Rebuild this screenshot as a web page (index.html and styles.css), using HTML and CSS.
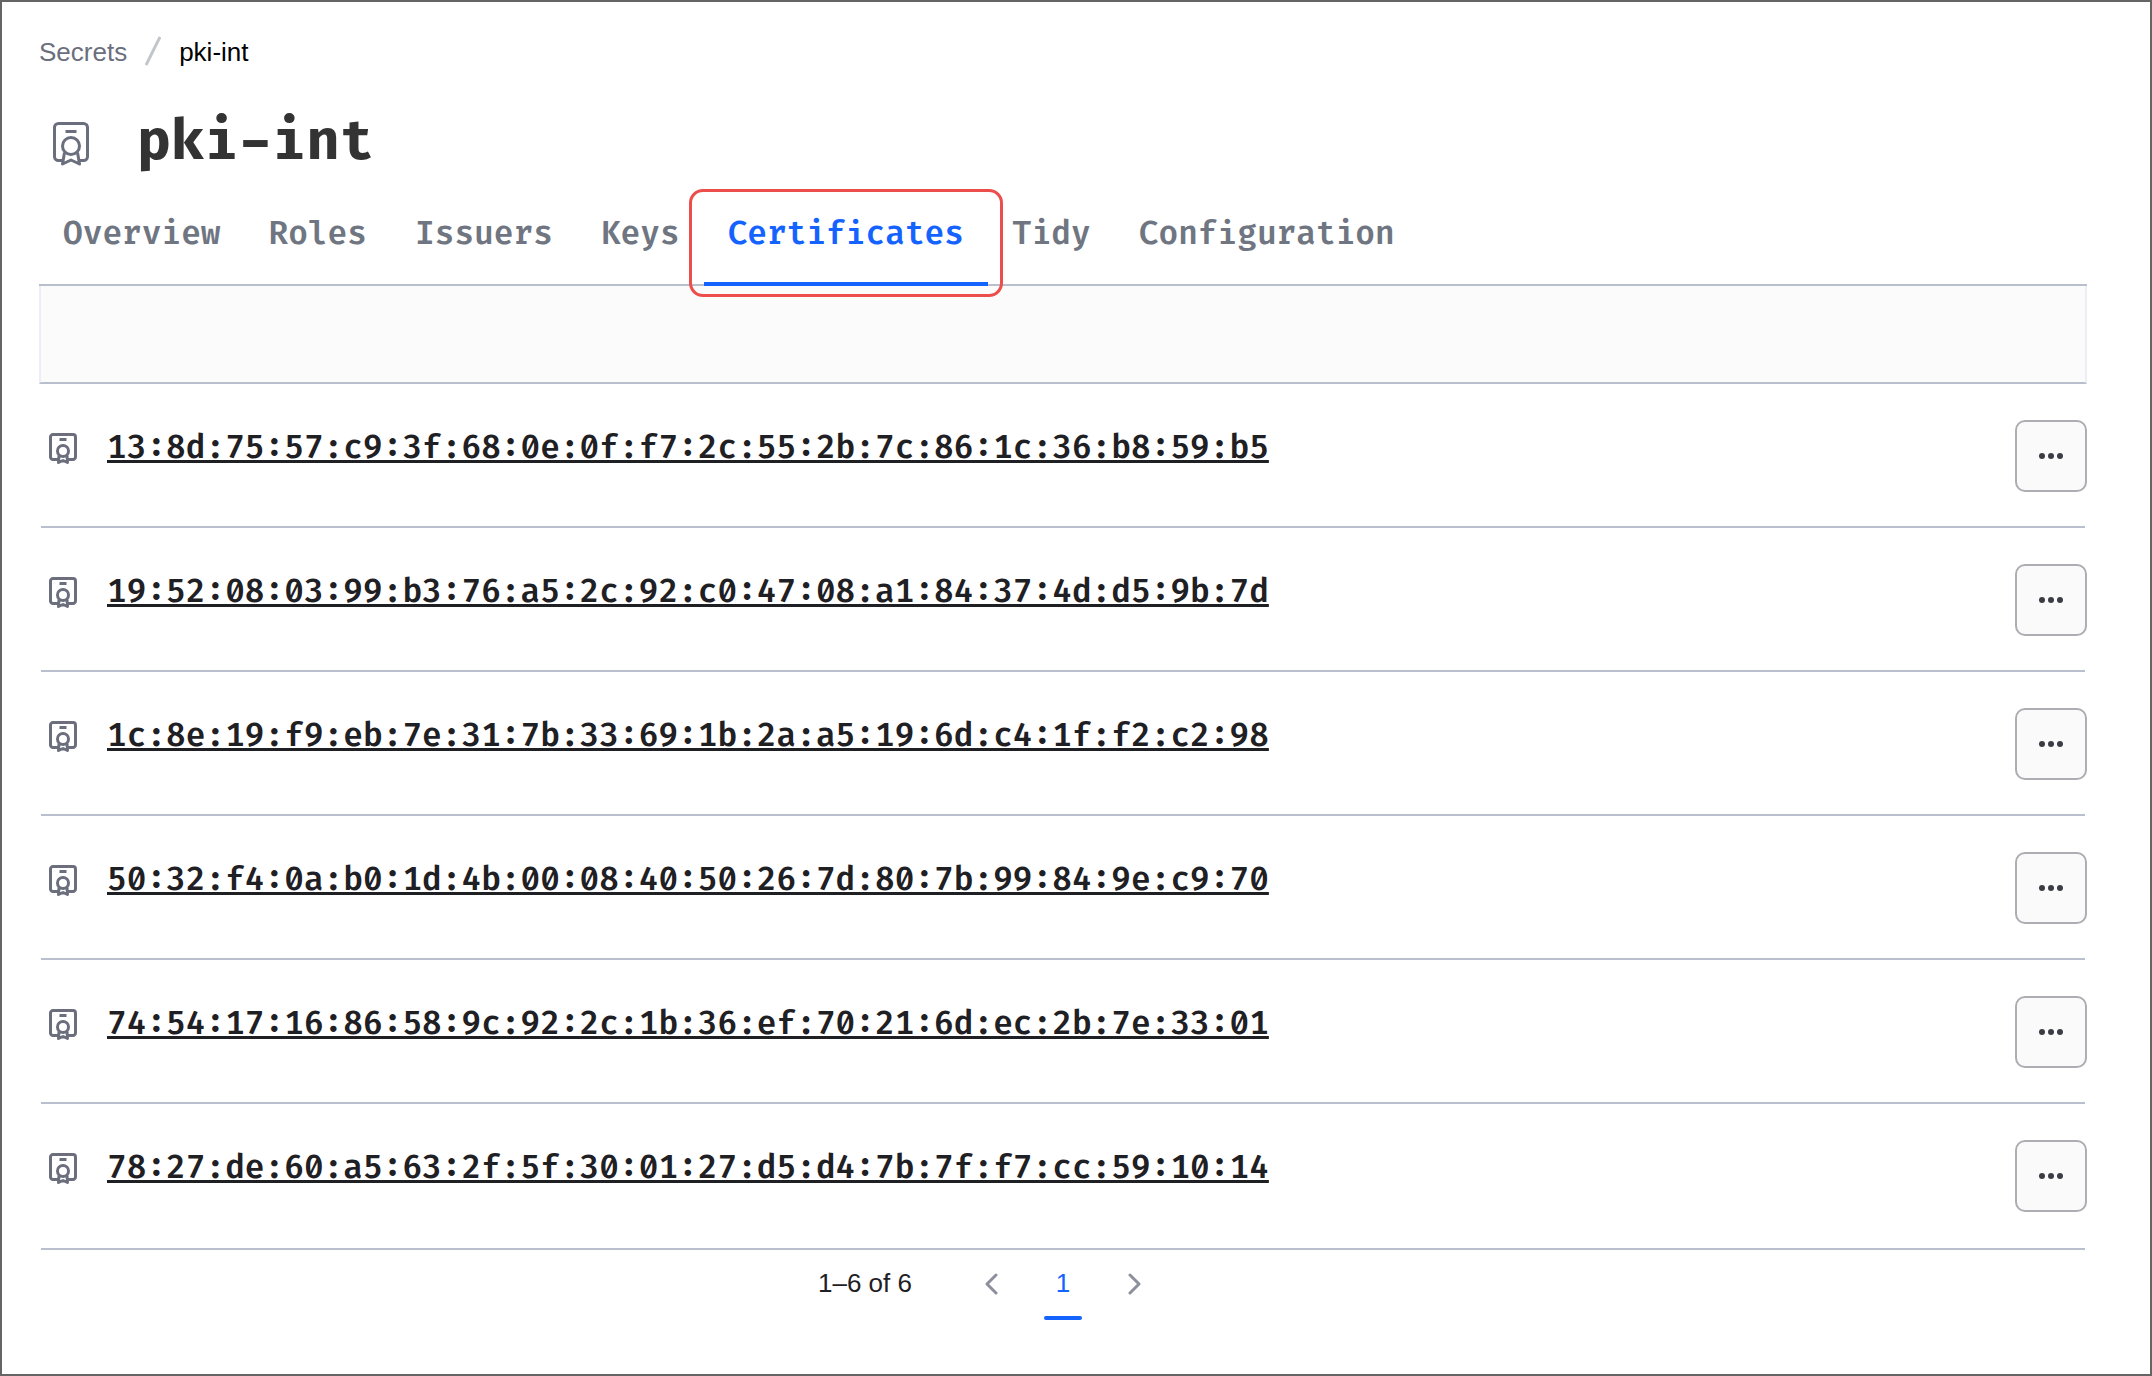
FILE: index.html
```html
<!DOCTYPE html>
<html lang="en">
<head>
<meta charset="utf-8">
<title>pki-int certificates</title>
<link rel="stylesheet" href="styles.css">
</head>
<body>
<svg class="sprite" aria-hidden="true">
  <symbol id="certificate-24" viewBox="0 0 48 48">
    <path d="M15.500 40.500h-4a4 4 0 0 1-4-4v-29a4 4 0 0 1 4-4h25a4 4 0 0 1 4 4v29a4 4 0 0 1-4 4h-4M18.500 11.500h11"/>
    <circle cx="24" cy="26" r="8.500"/>
    <path d="M17.500 32.500l-2 11.500 8.500-4 8.500 4-2-11.500"/>
  </symbol>
  <symbol id="certificate-16" viewBox="0 0 36 36">
    <path d="M13 28.500H8a2.500 2.500 0 0 1-2.500-2.500V6A2.500 2.500 0 0 1 8 3.500h20A2.500 2.500 0 0 1 30.500 6v20a2.500 2.500 0 0 1-2.500 2.500h-5M14.500 8.500h7"/>
    <circle cx="18" cy="20" r="5.500"/>
    <path d="M14 24.500l-.5 7 4.500-2 4.500 2-.5-7"/>
  </symbol>
  <symbol id="more" viewBox="0 0 24 24">
    <circle cx="3" cy="12" r="3"/><circle cx="12" cy="12" r="3"/><circle cx="21" cy="12" r="3"/>
  </symbol>
</svg>
<main class="page">
  <nav class="breadcrumb" aria-label="Breadcrumb">
    <a class="breadcrumb-link" href="#secrets">Secrets</a>
    <svg class="breadcrumb-slash" viewBox="0 0 16 32" aria-hidden="true"><path d="M1 29L15 1"/></svg>
    <a class="breadcrumb-current" href="#pki-int" aria-current="page">pki-int</a>
  </nav>
  <header class="title-row">
    <svg class="icon title-icon" aria-hidden="true"><use href="#certificate-24"/></svg>
    <h1 class="title">pki-int</h1>
  </header>
  <nav class="tabs" aria-label="Engine sections">
    <a class="tab" href="#overview">Overview</a>
    <a class="tab" href="#roles">Roles</a>
    <a class="tab" href="#issuers">Issuers</a>
    <a class="tab" href="#keys">Keys</a>
    <a class="tab tab-active" href="#certificates" aria-current="page">Certificates<span class="highlight"></span></a>
    <a class="tab" href="#tidy">Tidy</a>
    <a class="tab" href="#configuration">Configuration</a>
  </nav>
  <div class="toolbar"></div>
  <ul class="list">
    <li class="row">
      <a class="serial" href="#cert-1"><svg class="icon row-icon" aria-hidden="true"><use href="#certificate-16"/></svg><span class="serial-text">13:8d:75:57:c9:3f:68:0e:0f:f7:2c:55:2b:7c:86:1c:36:b8:59:b5</span></a>
      <button class="more" type="button" aria-label="More options"><svg class="dots" aria-hidden="true"><use href="#more"/></svg></button>
    </li>
    <li class="row">
      <a class="serial" href="#cert-2"><svg class="icon row-icon" aria-hidden="true"><use href="#certificate-16"/></svg><span class="serial-text">19:52:08:03:99:b3:76:a5:2c:92:c0:47:08:a1:84:37:4d:d5:9b:7d</span></a>
      <button class="more" type="button" aria-label="More options"><svg class="dots" aria-hidden="true"><use href="#more"/></svg></button>
    </li>
    <li class="row">
      <a class="serial" href="#cert-3"><svg class="icon row-icon" aria-hidden="true"><use href="#certificate-16"/></svg><span class="serial-text">1c:8e:19:f9:eb:7e:31:7b:33:69:1b:2a:a5:19:6d:c4:1f:f2:c2:98</span></a>
      <button class="more" type="button" aria-label="More options"><svg class="dots" aria-hidden="true"><use href="#more"/></svg></button>
    </li>
    <li class="row">
      <a class="serial" href="#cert-4"><svg class="icon row-icon" aria-hidden="true"><use href="#certificate-16"/></svg><span class="serial-text">50:32:f4:0a:b0:1d:4b:00:08:40:50:26:7d:80:7b:99:84:9e:c9:70</span></a>
      <button class="more" type="button" aria-label="More options"><svg class="dots" aria-hidden="true"><use href="#more"/></svg></button>
    </li>
    <li class="row">
      <a class="serial" href="#cert-5"><svg class="icon row-icon" aria-hidden="true"><use href="#certificate-16"/></svg><span class="serial-text">74:54:17:16:86:58:9c:92:2c:1b:36:ef:70:21:6d:ec:2b:7e:33:01</span></a>
      <button class="more" type="button" aria-label="More options"><svg class="dots" aria-hidden="true"><use href="#more"/></svg></button>
    </li>
    <li class="row">
      <a class="serial" href="#cert-6"><svg class="icon row-icon" aria-hidden="true"><use href="#certificate-16"/></svg><span class="serial-text">78:27:de:60:a5:63:2f:5f:30:01:27:d5:d4:7b:7f:f7:cc:59:10:14</span></a>
      <button class="more" type="button" aria-label="More options"><svg class="dots" aria-hidden="true"><use href="#more"/></svg></button>
    </li>
  </ul>
  <nav class="pagination" aria-label="Pagination">
    <span class="range">1–6 of 6</span>
    <div class="pages">
      <button class="page-button" type="button" aria-label="Previous page"><svg class="chevron" viewBox="0 0 14 22" aria-hidden="true"><path d="M12 2L3 11l9 9"/></svg></button>
      <a class="page-button page-current" href="#page-1" aria-current="page">1</a>
      <button class="page-button" type="button" aria-label="Next page"><svg class="chevron" viewBox="0 0 14 22" aria-hidden="true"><path d="M2 2l9 9-9 9"/></svg></button>
    </div>
  </nav>
</main>
</body>
</html>
```

FILE: styles.css
```css
*,
*::before,
*::after {
  box-sizing: border-box;
}

:root {
  --mono: "Fira Code", "Fira Mono", "Liberation Mono", monospace;
  --line: #b9bfcd;
  --muted: #6b6f7d;
  --blue: #1563ff;
}

body {
  margin: 0;
  background: #fff;
  color: #1f2024;
  font: 26px/32px "Liberation Sans", Arial, sans-serif;
}

a {
  color: inherit;
  text-decoration: none;
}

button {
  padding: 0;
  border: 0;
  background: none;
  color: inherit;
  font: inherit;
  cursor: pointer;
}

.sprite {
  display: none;
}

.page {
  min-height: 100vh;
  padding: 0 63px 0 37px;
  border: 2px solid #656565;
}

.breadcrumb {
  display: flex;
  align-items: center;
  gap: 18px;
  padding: 34px 0;
}

.breadcrumb-link {
  color: var(--muted);
}

.breadcrumb-current {
  color: #000;
}

.breadcrumb-slash {
  width: 16px;
  height: 32px;
  fill: none;
  stroke: #c2c5cb;
  stroke-width: 3;
}

.title-row {
  display: flex;
  align-items: center;
  gap: 42px;
  padding-left: 8px;
}

.icon {
  flex: none;
  fill: none;
  stroke: var(--muted);
  stroke-width: 3;
  stroke-linejoin: round;
}

.title-icon {
  width: 48px;
  height: 48px;
}

.title {
  margin: 0;
  padding-bottom: 4px;
  color: #333;
  font: 700 55px/80px var(--mono);
}

.tabs {
  display: flex;
  border-bottom: 2px solid var(--line);
}

.tab {
  position: relative;
  padding: 0 24px 2px;
  color: #6f7682;
  font: 600 32px/96px var(--mono);
}

.tab-active {
  color: var(--blue);
}

.tab-active::after {
  content: "";
  position: absolute;
  right: 0;
  bottom: -2px;
  left: 0;
  height: 4px;
  background: var(--blue);
}

.highlight {
  position: absolute;
  inset: 3px -15px -13px;
  border: 3px solid #ec4e4c;
  border-radius: 14px;
}

.toolbar {
  height: 98px;
  border: solid var(--line);
  border-width: 0 2px 2px;
  border-right-color: #ebeef2;
  border-left-color: #ebeef2;
  background: #fbfbfb;
}

.list {
  margin: 0 2px;
  padding: 0;
  list-style: none;
}

.row {
  display: flex;
  align-items: flex-start;
  justify-content: space-between;
  padding: 36px 0 34px;
  border-bottom: 2px solid var(--line);
}

.row:last-child {
  padding-bottom: 36px;
}

.serial {
  display: flex;
  align-items: center;
  gap: 26px;
  padding-left: 4px;
  font: 600 32px/56px var(--mono);
}

.serial-text {
  text-decoration: underline 3px;
  text-decoration-skip-ink: none;
  text-underline-offset: 2px;
}

.row-icon {
  width: 36px;
  height: 36px;
  margin-top: 2px;
}

.more {
  display: flex;
  align-items: center;
  justify-content: center;
  width: 72px;
  height: 72px;
  margin-right: -2px;
  border: 2px solid #adadb3;
  border-radius: 10px;
  background: #fafafa;
}

.dots {
  width: 24px;
  height: 24px;
  fill: #3b3d45;
}

.pagination {
  display: grid;
  grid-template-columns: 1fr auto 1fr;
  align-items: center;
}

.range {
  padding: 0 43px 2px 0;
  text-align: right;
}

.pages {
  display: flex;
}

.page-button {
  display: flex;
  align-items: center;
  justify-content: center;
  width: 72px;
  height: 68px;
}

.page-current {
  position: relative;
  padding-bottom: 2px;
  color: var(--blue);
}

.page-current::after {
  content: "";
  position: absolute;
  right: 17px;
  bottom: -2px;
  left: 17px;
  height: 4px;
  border-radius: 2px;
  background: var(--blue);
}

.chevron {
  width: 14px;
  height: 22px;
  fill: none;
  stroke: #8c909c;
  stroke-width: 3;
  stroke-linecap: round;
  stroke-linejoin: round;
}
```
